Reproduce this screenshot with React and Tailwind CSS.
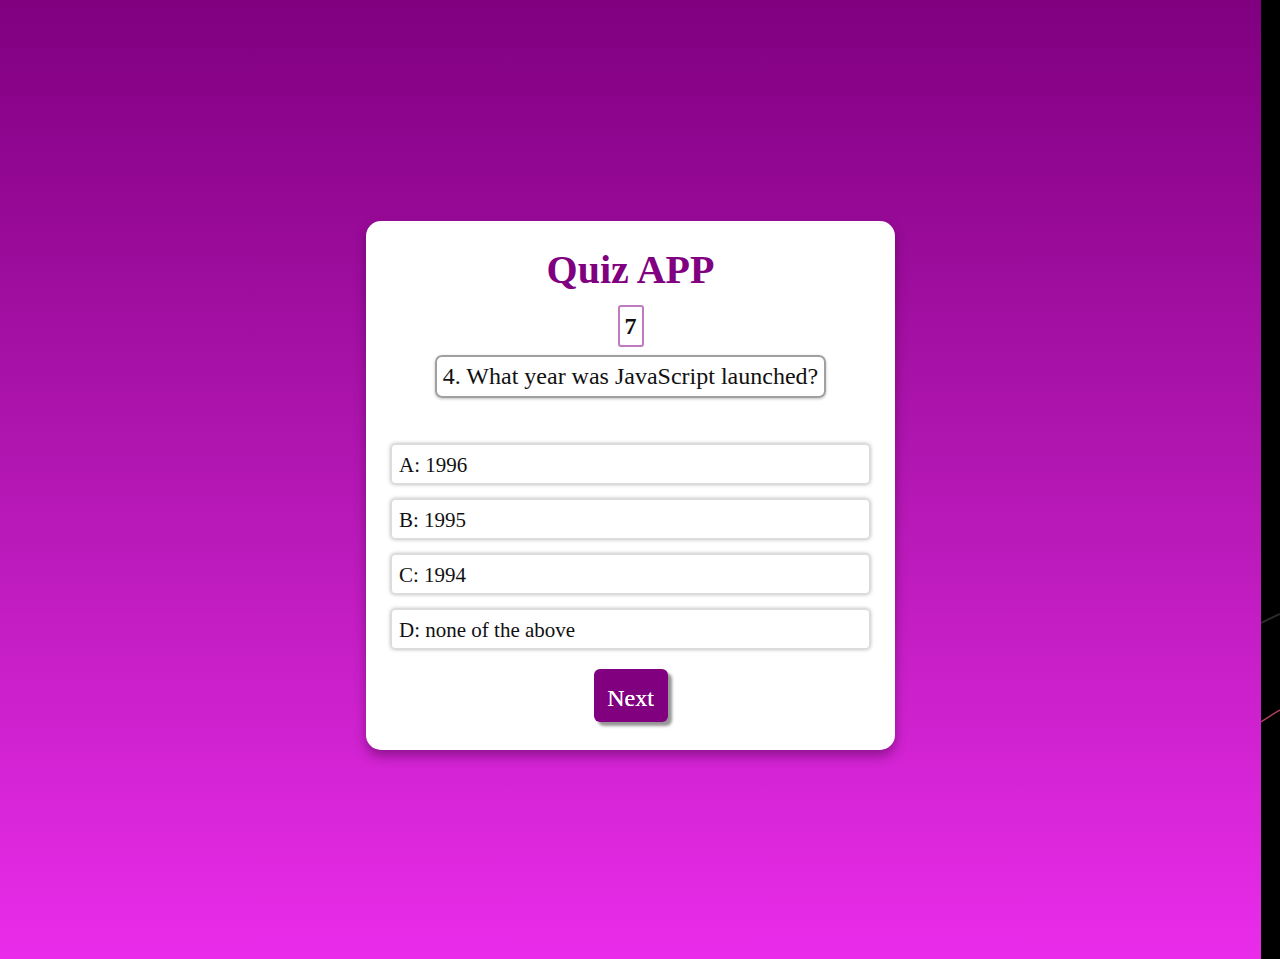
import React, { useState } from 'react';

const options = [
  { key: 'A', text: '1996' },
  { key: 'B', text: '1995' },
  { key: 'C', text: '1994' },
  { key: 'D', text: 'none of the above' },
];

const QuizCard = () => {
  const [selected, setSelected] = useState(null);

  return (
    <div className="self-start w-[529px] bg-white rounded-[15px] px-[25px] pt-[26px] pb-[28px] shadow-[0_6px_12px_rgba(60,0,60,0.45)] flex flex-col items-center">
      <h1 className="text-[40px] leading-[46px] font-bold text-[#800080]">Quiz APP</h1>

      <div className="mt-[12px] border-2 border-[#c07ac0] rounded-[3px] px-[5px] py-[5px] text-[24px] leading-[28px] font-bold text-[#111]">
        7
      </div>

      <div className="mt-[8px] border-2 border-[#a0a0a0] rounded-[7px] px-[6px] py-[6px] text-[24px] leading-[27px] text-[#111] shadow-[0_1px_3px_rgba(0,0,0,0.25)]">
        4. What year was JavaScript launched?
      </div>

      <div className="mt-[46px] w-full flex flex-col gap-[15px]">
        {options.map((opt) => (
          <button
            key={opt.key}
            onClick={() => setSelected(opt.key)}
            className={
              selected === opt.key
                ? 'w-full h-[40px] text-left px-[7px] pt-[3px] border border-[#800080] rounded-[4px] bg-white text-[21px] text-[#111] shadow-[0_0_4px_rgba(0,0,0,0.35)]'
                : 'w-full h-[40px] text-left px-[7px] pt-[3px] border border-[#dcdcdc] rounded-[4px] bg-white text-[21px] text-[#111] shadow-[0_0_4px_rgba(0,0,0,0.35)]'
            }
          >
            {opt.key}: {opt.text}
          </button>
        ))}
      </div>

      <button className="mt-[20px] w-[74px] h-[53px] pt-[4px] bg-[#800080] text-white rounded-[6px] text-[24px] [text-shadow:0_0_0.6px_white] shadow-[4px_4px_3px_rgba(80,80,80,0.6)]">
        Next
      </button>
    </div>
  );
};

export default function App() {
  return (
    <div className="flex w-full h-[959px] overflow-hidden font-['Liberation_Serif',serif]">
      <div className="w-[1261px] h-full bg-gradient-to-b from-[#800080] to-[#ea2cea] flex items-start justify-center pt-[221px]">
        <QuizCard />
      </div>
      <div className="flex-1 h-full bg-black">
        <svg width="19" height="959" viewBox="0 0 19 959">
          <path d="M0 623 Q10 618 19 614" stroke="#2a2a2a" strokeWidth="2" fill="none" />
          <path d="M0 722 Q9 716 19 710" stroke="#b0405a" strokeWidth="1.5" fill="none" />
        </svg>
      </div>
    </div>
  );
}
